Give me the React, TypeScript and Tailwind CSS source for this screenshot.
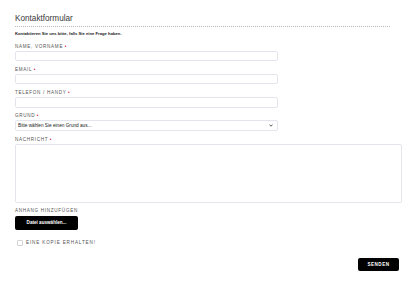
import React from "react";

const Label = ({ text, star = true, className = "" }: { text: string; star?: boolean; className?: string }) => (
  <div className={`h-[5px] leading-[5px] text-[4.6px] tracking-[0.7px] text-[#555] uppercase whitespace-nowrap ${className}`}>
    {text}
    {star && <span className="text-[#d0103a] ml-[1.5px]">•</span>}
  </div>
);

export default function App() {
  return (
    <div className="w-[415px] h-[299px] bg-white font-['Liberation_Sans',Arial,sans-serif] overflow-hidden">
      <div className="pl-[15px] pt-[14.5px] flex flex-col">
        <h1 className="text-[8.2px] leading-[8.2px] text-[#3a3a3a] font-normal">Kontaktformular</h1>
        <div className="w-[375px] border-b border-dotted border-[#b8b8b8] mt-[3px]" />
        <p className="text-[4.2px] leading-[4px] font-bold text-[#222] mt-[5px]">
          Kontaktieren Sie uns bitte, falls Sie eine Frage haben.
        </p>

        <Label text="Name, Vorname" className="mt-[8px]" />
        <div className="mt-[2px] w-[263px] h-[10.5px] border border-[#e4e4ee] rounded-[2px]" />

        <Label text="Email" className="mt-[5.75px]" />
        <div className="mt-[2px] w-[263px] h-[10.5px] border border-[#e4e4ee] rounded-[2px]" />

        <Label text="Telefon / Handy" className="mt-[5.75px]" />
        <div className="mt-[2px] w-[263px] h-[10.5px] border border-[#e4e4ee] rounded-[2px]" />

        <Label text="Grund" className="mt-[5.75px]" />
        <div className="mt-[2px] w-[263px] h-[10.5px] border border-[#e4e4ee] rounded-[2px] flex items-center justify-between pl-[2px] pr-[4px]">
          <span className="text-[4.7px] leading-[5px] text-[#222]">Bitte wählen Sie einen Grund aus...</span>
          <svg width="4" height="3" viewBox="0 0 4 3">
            <path d="M0.5 0.6 L2 2.2 L3.5 0.6" stroke="#444" strokeWidth="0.9" fill="none" />
          </svg>
        </div>

        <Label text="Nachricht" className="mt-[5.75px]" />
        <div className="mt-[2px] w-[387px] h-[59px] border border-[#e4e4ee] rounded-[2px]" />

        <Label text="Anhang hinzufügen" star={false} className="mt-[5.5px]" />
        <div className="mt-[2.5px] w-[63px] h-[14px] bg-black rounded-[2px] flex items-center justify-center">
          <span className="text-[4.6px] leading-[5px] font-bold text-white">Datei auswählen...</span>
        </div>

        <div className="mt-[10px] flex items-center pl-[2px]">
          <div className="w-[6px] h-[6px] border border-[#d4d4d4] rounded-[1px]" />
          <span className="ml-[3px] text-[4.6px] leading-[5px] tracking-[0.85px] text-[#555]">EINE KOPIE ERHALTEN!</span>
        </div>
      </div>
      <div className="flex justify-end pr-[16px] mt-[12.5px]">
        <div className="w-[41px] h-[13px] bg-black rounded-[2px] flex items-center justify-center">
          <span className="text-[4.6px] leading-[5px] font-bold tracking-[0.5px] text-white">SENDEN</span>
        </div>
      </div>
    </div>
  );
}
